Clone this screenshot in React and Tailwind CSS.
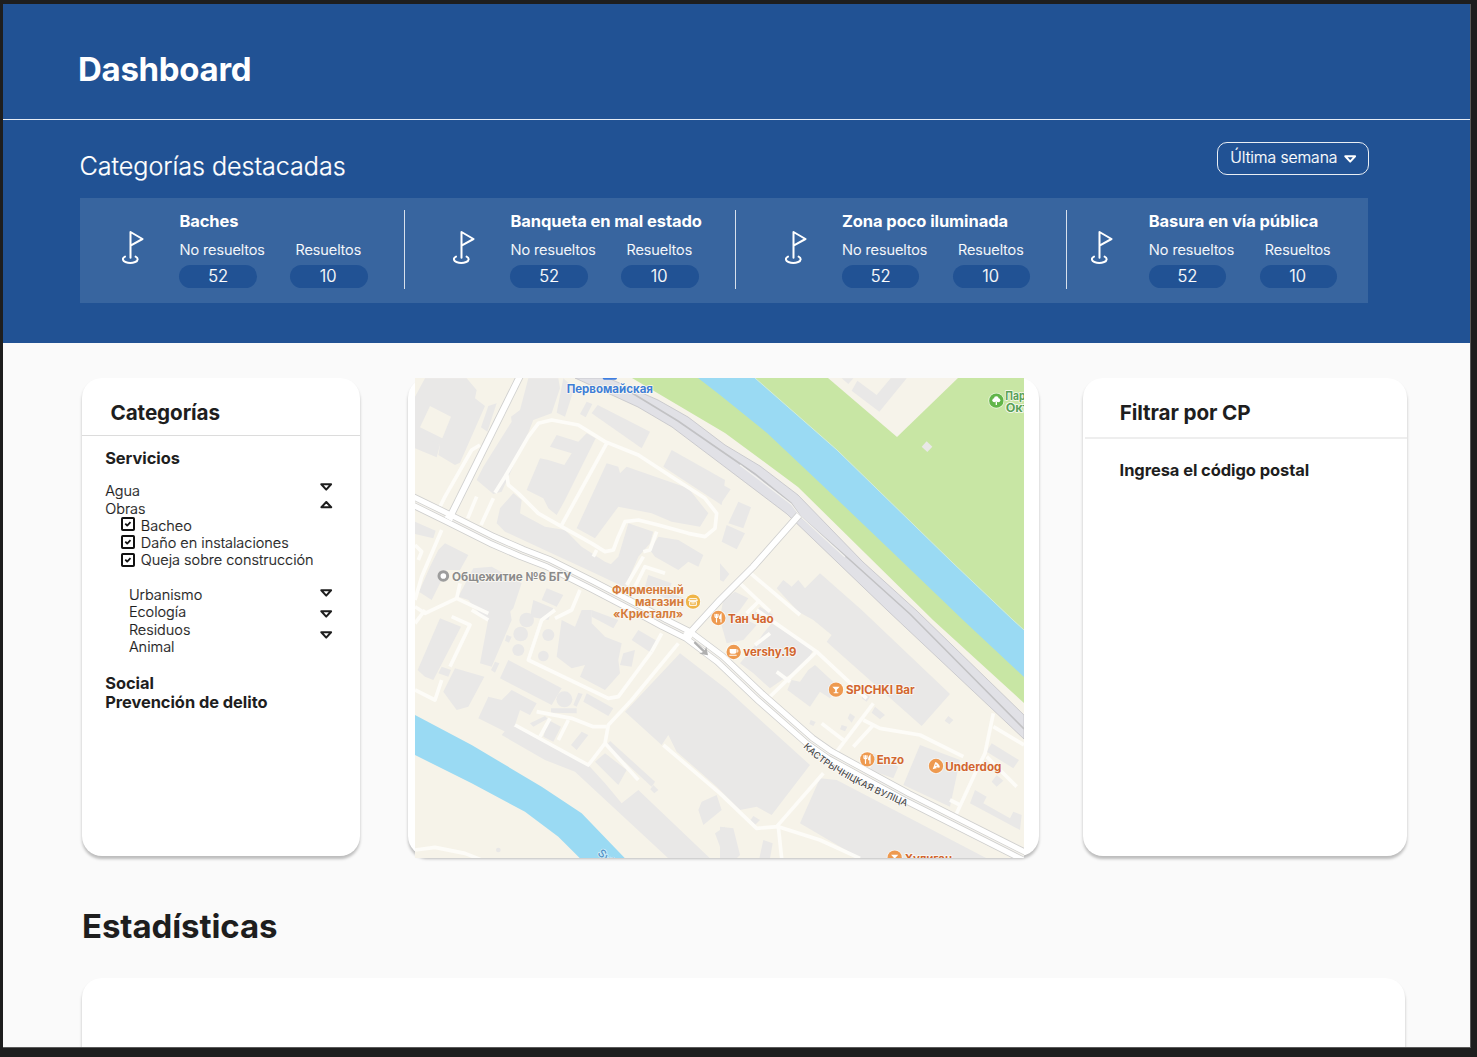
import React from "react";

const stats = [
  { name: "Baches", cell: "w-[324.5px] pl-[42.5px]" },
  { name: "Banqueta en mal estado", cell: "w-[331px] pl-[48px] border-l" },
  { name: "Zona poco iluminada", cell: "w-[331px] pl-[48.5px] border-l" },
  { name: "Basura en vía pública", cell: "flex-1 pl-[24.4px] border-l" },
];

const light = "font-light [-webkit-text-stroke:0.2px_currentColor]";

function Flag() {
  return (
    <svg className="mt-5 h-[34px] w-[22px] shrink-0" viewBox="0 0 22 34" fill="none" stroke="#fff" strokeWidth="2" strokeLinejoin="round" strokeLinecap="round">
      <path d="M8.5 27.8V2L20.5 9L8.5 15.6" />
      <path d="M3 26.6C-.1 28 .4 30.9 3.4 32C6 33 10.6 33 13.2 32C16.2 30.9 16.6 28 13.6 26.6" />
    </svg>
  );
}

function Arrow({ up, className = "" }) {
  return (
    <svg className={`block h-[8px] w-[13px] ${up ? "rotate-180" : ""} ${className}`} viewBox="0 0 13 8" fill="none" stroke="currentColor" strokeWidth="2" strokeLinejoin="round">
      <path d={up ? "M1.8 1.8H11.6L6.7 7Z" : "M1.3 1.3H11.1L6.2 6.6Z"} />
    </svg>
  );
}

function Check() {
  return (
    <svg className="block h-[14px] w-[14px]" viewBox="0 0 14 14" fill="none" stroke="#111" strokeLinejoin="round">
      <rect x="1" y="1" width="12" height="12" rx="0.8" strokeWidth="2" />
      <path d="M4.3 6.7L6.2 8.6L9.5 5.1" strokeWidth="1.8" />
    </svg>
  );
}

function Pill({ label, value, labelClass = "", valueClass = "" }) {
  return (
    <div className="w-[77.5px]">
      <p className={`h-[18px] text-[14.5px] leading-[18px] whitespace-nowrap ${labelClass}`}>{label}</p>
      <div className={`mt-[6.2px] h-[23px] rounded-full bg-[#215294] text-center text-[16.6px] leading-[23px] ${valueClass}`}>{value}</div>
    </div>
  );
}

const poly = (list) => list.map((p) => <polygon key={p} points={p} />);
const line = (list) => list.map((p) => <polyline key={p} points={p} />);

const A = "translate(405 370) scale(.33333)";
const B = "translate(720 370) scale(.33333)";
const C = "translate(405 610) scale(.33333)";
const D = "translate(720 610) scale(.33333)";

const buildingsA = [
  "60,25 185,25 215,60 210,85 240,108 165,278 150,285 100,255 105,225 30,200 30,80",
  "30,185 105,225 95,262 30,235",
  "250,108 275,100 247,185 228,172",
  "370,25 460,25 465,55 440,130 385,150 365,200 290,365 265,372 215,330 235,290 320,155 318,140 345,120",
  "475,25 508,55 480,140 455,128",
  "545,95 562,102 542,142 525,132",
  "578,105 735,185 710,235 560,130",
  "455,195 520,215 545,190 572,205 480,390 455,435 430,415 415,385 365,360 405,265 430,270 478,285 500,250 435,230",
  "605,280 640,290 645,310 665,290 850,355 910,430 885,470 800,455 740,430 640,410 570,505 515,475",
  "800,240 960,330 950,405 775,290",
  "285,415 325,370 350,390 345,430 420,470 480,480 530,530 600,575 660,600 665,655 560,605 430,545 300,485 275,460",
  "670,460 745,485 735,520 700,560 665,640 600,600 640,560",
  "760,500 820,510 895,555 880,590 850,575 820,600 750,560 735,540",
  "30,455 92,482 85,505 30,492",
  "120,520 190,555 165,600 125,600 80,690 42,665 75,590 100,540",
  "205,595 260,590 350,640 325,715 290,750 240,750 190,690 160,680",
  "425,655 475,675 455,710 410,690",
  "385,690 445,715 430,750 375,740",
  "730,615 800,640 790,665 850,690 830,715 720,650",
];
const roadsA = [
  "270,368 300,320 370,200 400,160 440,150 520,165 600,215 700,255 800,320 900,385 935,430 930,475 900,500 850,490 760,465 700,450 660,455 640,500 625,540 600,545 560,520 470,470 400,430 340,370 310,345 305,310",
  "605,220 470,465",
  "225,225 200,240 120,380 100,420",
  "215,380 188,445",
  "265,385 228,465",
  "755,485 735,540 715,545",
  "715,560 665,645",
  "780,610 720,590 690,650",
  "110,480 50,620 30,690",
  "30,710 60,730 155,685 250,730",
  "155,685 165,640",
  "30,525 50,545 40,570",
  "525,660 500,720 450,745",
  "575,540 565,560",
];
const buildingsC = [
  "105,25 168,50 85,210 60,200 38,180",
  "150,175 238,200 190,290 155,300 115,245",
  "110,170 138,180 130,200 100,190",
  "255,0 315,0 320,30 260,170 225,160",
  "310,150 470,235 440,285 285,205",
  "320,240 395,280 375,315 345,300 330,345 310,370 220,325 250,260 290,270",
  "310,350 345,350 440,410 550,465 600,520 650,580 700,540 915,745 790,745 510,485 420,450 290,375",
  "570,455 600,430 665,480 640,525",
  "615,393 750,515 740,530 605,405",
  "745,525 760,540 748,550 736,538",
  "470,30 510,50 530,0 560,0 560,40 600,80 650,100 640,150 645,190 600,240 525,200 540,165 500,175 455,140",
  "560,0 640,30 625,55 560,20",
  "700,60 760,95 740,130 680,90",
  "655,130 690,120 680,170 645,165",
  "545,250 625,295 610,318 535,275",
  "430,330 468,350 445,395 415,380",
  "530,365 550,375 515,420 498,405",
  "375,340 420,318 428,326 385,350",
  "438,295 515,295 515,310 438,308",
  "520,248 533,252 515,290 505,285",
  "270,155 283,160 270,188 258,180",
  "305,75 320,80 312,98 300,92",
  "890,575 935,555 950,600 895,645 880,600",
  "930,670 960,650 960,725 945,710",
];
const circlesC = [[365, 30, 22], [347, 72, 22], [340, 120, 18], [430, 75, 18], [415, 138, 16], [478, 268, 24], [280, 720, 7]];
const roadsC = [
  "30,240 90,270 110,210",
  "140,20 195,45 135,170",
  "450,0 410,30 370,150 610,265 640,260 740,125",
  "820,100 680,270 610,345 600,400 550,465 330,345",
  "395,305 500,325 565,350 605,350",
  "435,325 405,380",
  "490,330 460,390",
  "600,400 700,510",
  "30,720 90,712 180,730 230,750",
  "30,40 60,0",
  "200,0 250,30",
  "770,70 740,125",
];
const buildingsB = [
  "0,340 32,358 0,405",
  "55,395 93,412 70,475 25,460",
  "20,465 75,490 50,538 5,515",
  "0,580 28,612 10,635 0,630",
  "10,690 45,665 85,685 60,720 30,750 0,740",
  "120,710 160,735 140,760 95,740",
];
const roadsB = ["80,600 240,735", "60,640 150,725", "120,690 80,730"];
const buildingsD = [
  "170,-65 190,-90 215,-70 235,-90 255,-65 300,-110 425,0 690,252 605,348 320,95 335,75 280,30 235,5",
  "155,40 280,120 250,170 200,200 150,235 100,190 60,160 110,100 130,70",
  "0,30 40,10 110,45 70,90 20,100",
  "285,165 350,225 330,265 300,245 270,290 202,240 215,210 240,215 265,180",
  "430,245 450,260 440,275 425,265",
  "465,290 495,315 480,328 455,308",
  "390,310 405,320 395,338 383,325",
  "365,345 382,350 375,364 360,358",
  "272,330 287,336 280,348 268,342",
  "685,318 700,330 688,343 674,332",
  "600,405 720,450 690,590 550,525",
  "460,430 535,470 520,505 450,480",
  "815,400 897,450 880,475 800,425",
  "765,540 800,560 790,580 870,625 880,605 905,615 900,660 750,580",
  "830,495 850,512 830,530 815,515",
  "-120,130 20,238 270,465 155,615 110,590 60,600 -10,530 -130,425 -155,375 -175,405 -285,305",
  "100,618 120,630 105,645 90,632",
  "0,650 40,655 60,735 50,745 0,745",
  "130,690 158,700 150,745 118,745",
  "300,505 350,510 800,745 420,745 240,640",
];
const roadsD = [
  "170,650 310,490",
  "-170,405 0,550 110,655 175,650 185,745",
  "175,650 300,690 420,745",
  "350,425 460,280",
  "110,0 290,125 440,265",
  "290,125 150,260",
  "170,185 210,215",
  "150,70 105,105",
  "430,330 480,355 600,375 730,440",
  "400,410 460,345",
  "820,310 795,430 770,480 705,620",
  "820,350 912,405",
  "305,340 370,390",
  "800,440 890,530",
  "690,570 720,585",
];

const mainRoad = "405,497 448,518 492,540 522,553 548,563 592,585 640,610 664,623 688,635 720,659 760,697 810,741 830,755 907,797 1030,859";

function Pin({ x, y, fill = "#ee9a50", children }) {
  return (
    <g transform={`translate(${x + 1} ${y})`}>
      <circle r="24" fill="#fff" opacity=".6" />
      <circle r="21.5" fill={fill} />
      {children}
    </g>
  );
}

const Fork = () => (
  <g fill="none" stroke="#fff" strokeWidth="3.6" strokeLinecap="round">
    <path d="M-10 -11V-5Q-10 -1 -5.500 -1Q-1 -1 -1 -5V-11M-5.500 -11V12" />
    <path d="M8 12V-11Q3 -6 4 1H8" fill="#fff" />
  </g>
);
const Glass = () => <path d="M-11 -9H11L2.500 0V8H7V11H-7V8H-2.500V0Z" fill="#fff" />;

function Label({ x, y, len, fill = "#d2662f", children }) {
  return (
    <text x={x} y={y} textLength={len} lengthAdjust="spacingAndGlyphs" fill={fill}>
      {children}
    </text>
  );
}

function CityMap() {
  return (
    <svg className="block h-[480.5px] w-[609px]" viewBox="415 378 609 480.5" preserveAspectRatio="none">
      <rect x="415" y="378" width="609" height="481" fill="#f6f3e9" />
      <g fill="#e9e8e7">
        <g transform={A}>
          {poly(buildingsA)}
          <polygon points="75,108 138,140 112,205 45,172" fill="#f6f3e9" />
        </g>
        <g transform={B}>{poly(buildingsB)}</g>
        <g transform={C}>
          {poly(buildingsC)}
          {circlesC.map(([x, y, r]) => <circle key={`${x}-${y}`} cx={x} cy={y} r={r} />)}
        </g>
        <g transform={D}>{poly(buildingsD)}</g>
      </g>
      <g fill="none" stroke="#fdfcf8" strokeWidth="11" strokeLinejoin="round">
        <g transform={A}>{line(roadsA)}</g>
        <g transform={B}>{line(roadsB)}</g>
        <g transform={C}>{line(roadsC)}</g>
        <g transform={D}>{line(roadsD)}</g>
      </g>

      {/* Park and rivers */}
      <polygon points="632,378 725,433 798,487 933,620 1024,703 1024,378" fill="#c8e6a4" />
      <polygon points="828,378 897,437 958,378" fill="#f6f3ea" />
      <g transform={B} fill="#e9e8e7">
        <polygon points="395,62 412,32 470,75 512,25 560,25 478,125" />
        <polygon points="365,25 400,25 385,42" />
        <polygon points="620,214 637,230 622,246 605,230" />
      </g>
      <polygon points="755,378 837,450 953,563 1013,620 1024,630 1024,677 963,620 887,547 820,483 767,433 720,395 698,378" fill="#9adaf3" />
      <polyline points="755,378 837,450 953,563 1013,620 1024,630" fill="none" stroke="#d5efdc" strokeWidth=".9" />
      <polygon transform={C} points="30,315 200,405 410,530 530,610 662,747 527,747 460,680 360,605 200,520 30,435" fill="#9adaf3" />

      {/* Railway */}
      <polygon points="608,378 658,400 688,417 725,445 760,466 798,495 863,562 917,611 1024,715 1024,739 888,611 787,514 725,467 672,427 638,407 575,378" fill="#e1e1e6" stroke="#c3c3c8" strokeWidth=".8" />
      <polyline points="632,393 678,421 720,450 755,474 791,503 800,516 850,560 910,614 1024,729" fill="none" stroke="#c2c2c4" strokeWidth="1.6" />
      <polyline points="740,465 791,504 800,516 845,557" fill="none" stroke="#f3f2ee" strokeWidth="1.2" />

      {/* Streets */}
      <g fill="none" strokeLinejoin="round">
        <g stroke="#cfcfce">
          <polyline points="520,376 450,517" strokeWidth="7.6" />
          <polyline points="799,515 753,567 720,600 688,635" strokeWidth="7.4" />
          <polyline points={mainRoad} strokeWidth="14.6" />
        </g>
        <g stroke="#fff">
          <polyline points="520,376 450,517" strokeWidth="6" />
          <polyline points="799,515 753,567 720,600 688,635" strokeWidth="5.8" />
          <polyline points={mainRoad} strokeWidth="13" />
        </g>
        <polyline points={mainRoad} stroke="#cfcfce" strokeWidth="2.6" />
        <polyline points={mainRoad} stroke="#f4f2ec" strokeWidth="1.2" />
        <path d="M446 515L453 519M684 633L692 637" stroke="#fff" strokeWidth="5" />
      </g>
      <g transform={C} fill="#b0b0b0">
        <path d="M870 94L899 121L904 110L909 136L883 131L894 126L866 99Z" />
      </g>

      {/* Places */}
      <g fontFamily="Inter, sans-serif" fontWeight="700" fontSize="34.5" stroke="#fbf9f3" strokeWidth="5" strokeLinejoin="round" paintOrder="stroke">
        <g transform={A}>
          <rect x="593" y="15" width="43" height="14" rx="5" fill="#3f7ee0" stroke="none" />
          <Label x={485} y={69} len={259} fill="#3f7ed6">Первомайская</Label>
          <circle cx="115" cy="618" r="13" fill="#fff" stroke="#9d9d9d" strokeWidth="9" paintOrder="normal" />
          <Label x={141} y={632} len={358} fill="#8b8b8b">Общежитие №6 БГУ</Label>
          <Label x={621} y={673} len={215} fill="#d57c3b">Фирменный</Label>
          <Label x={690} y={708} len={147} fill="#d57c3b">магазин</Label>
          <Label x={624} y={743} len={211} fill="#d57c3b">«Кристалл»</Label>
        </g>
        <g transform={B}>
          <Label x={856} y={90} len={78} fill="#57a157">Парк</Label>
          <Label x={857} y={125} len={70} fill="#57a157">Окт</Label>
        </g>
        <g transform={D}>
          <Label x={24} y={39} len={137}>Тан Чао</Label>
          <Label x={70} y={139} len={159}>vershy.19</Label>
          <Label x={378} y={252} len={206}>SPICHKI Bar</Label>
          <Label x={470} y={461} len={82}>Enzo</Label>
          <Label x={676} y={482} len={168}>Underdog</Label>
          <Label x={554} y={759} len={142}>Хулиган</Label>
        </g>
      </g>
      <g stroke="none">
        <g transform={A}>
          <Pin x={863} y={695} fill="#efb548">
            <path d="M-11 -9H11L13 -3H-13ZM-10 0H10V11H-10Z" fill="none" stroke="#fff" strokeWidth="3" />
            <path d="M-5 4H5" stroke="#fff" strokeWidth="3" />
          </Pin>
          <Pin x={939} y={744}><Fork /></Pin>
        </g>
        <g transform={B}>
          <Pin x={828} y={92} fill="#61b549">
            <path d="M-2 2H2V13H-2Z" fill="#fff" />
            <circle cx="-6" cy="-1" r="6" fill="#fff" />
            <circle cx="6" cy="-1" r="6" fill="#fff" />
            <circle cy="-6" r="7" fill="#fff" />
          </Pin>
        </g>
        <g transform={D}>
          <Pin x={40} y={126}>
            <path d="M-12 -9H8V0Q8 5 3 5H-7Q-12 5 -12 0ZM-13 8H9V11.500H-13Z" fill="#fff" />
            <path d="M8 -6H12.500V0H8" fill="none" stroke="#fff" strokeWidth="2.5" />
          </Pin>
          <Pin x={347} y={239}><Glass /></Pin>
          <Pin x={441} y={448}><Fork /></Pin>
          <Pin x={647} y={468}>
            <path d="M-10 10L-2 -12Q9 -8 12 4Z" fill="#fff" />
            <circle cx="0" cy="-2" r="2.2" fill="#ee9a50" />
            <circle cx="3" cy="4" r="2" fill="#ee9a50" />
          </Pin>
          <Pin x={523} y={743}><Glass /></Pin>
          <path id="street" d="M249 411C304 468 402 526 564 592" fill="none" />
          <text fontFamily="Inter, sans-serif" fontSize="28" fontWeight="500" fill="#505050" stroke="#fff" strokeWidth="4" paintOrder="stroke">
            <textPath href="#street" textLength="360" lengthAdjust="spacing">КАСТРЫЧНІЦКАЯ ВУЛІЦА</textPath>
          </text>
        </g>
        <text transform="translate(597 854) rotate(42)" fontFamily="Inter, sans-serif" fontSize="11" fontWeight="500" fill="#4f8fc4" stroke="#d6f0fa" strokeWidth="1.5" paintOrder="stroke">Svi</text>
      </g>
    </svg>
  );
}

const card = "h-[478px] rounded-[20px] bg-white shadow-[0_3px_3px_rgba(0,0,0,0.25)]";

export default function App() {
  return (
    <div className="h-[1057px] w-[1477px] overflow-hidden bg-[#1e1e1e] pt-[4px] pl-[3px] font-['Inter',sans-serif] text-[#1e1e1e]">
      <div className="h-[1044px] w-[1468px] overflow-hidden border-r border-b border-[#5a5a5a] bg-[#fafafa]">
        <header className="h-[339.3px] bg-[#215294] text-white">
          <div className="h-[116px] border-b border-[#e6ecf5] pt-[45.4px] pl-[75px]">
            <h1 className="text-[33px] leading-[40px] font-bold tracking-[-0.3px]">Dashboard</h1>
          </div>
          <div className="flex h-[77.5px] justify-between pr-[101.2px] pl-[76.5px]">
            <h2 className={`mt-[29.5px] text-[25.2px] leading-[32px] tracking-[-0.003em] ${light}`}>Categorías destacadas</h2>
            <button className={`mt-[21.6px] flex h-[33px] w-[152px] items-center rounded-[10px] border border-white/90 pl-[12.5px] text-[15.75px] tracking-[-0.006em] ${light}`}>
              Última semana
              <Arrow className="mt-px ml-[6.2px]" />
            </button>
          </div>
          <div className="ml-[76.5px] flex h-[105.5px] w-[1288.5px] bg-[#38659f] py-[12.5px]">
            {stats.map((s) => (
              <div key={s.name} className={`flex h-[78.5px] border-white/80 ${s.cell}`}>
                <Flag />
                <div className="ml-[35.4px]">
                  <h3 className="text-[16.5px] leading-[22px] font-bold tracking-[-0.005em]">{s.name}</h3>
                  <div className={`mt-[8.8px] flex gap-[33.5px] ${light}`}>
                    <Pill label="No resueltos" value="52" />
                    <Pill label="Resueltos" value="10" labelClass="pl-[5px]" valueClass="pr-[2px]" />
                  </div>
                </div>
              </div>
            ))}
          </div>
        </header>

        <main className="pl-[79px]">
          <div className="mt-[34.7px] flex">
            <section className={`w-[278px] ${card}`}>
              <h2 className="h-[58px] border-b border-[#dcdcdc] pt-[21.2px] pl-[28.5px] text-[20.7px] leading-[28px] font-bold tracking-[-0.005em]">Categorías</h2>
              <h3 className="mt-[11.2px] ml-[23.2px] text-[16.4px] leading-[22px] font-bold tracking-[-0.003em]">Servicios</h3>
              <div className={`mt-[13px] flex h-[173.3px] justify-between pr-[27.5px] pl-[23.2px] text-[14.5px] leading-[17.33px] tracking-[-0.001em] ${light}`}>
                <div>
                  <p>Agua</p>
                  <p>Obras</p>
                  <div className="flex pl-[15.6px]">
                    <div className="flex flex-col gap-[4.2px]">
                      <Check />
                      <Check />
                      <Check />
                    </div>
                    <div className="pl-[6px] whitespace-nowrap">
                      <p>Bacheo</p>
                      <p>Daño en instalaciones</p>
                      <p>Queja sobre construcción</p>
                    </div>
                  </div>
                  <div className="mt-[17.2px] pl-[23.7px]">
                    <p>Urbanismo</p>
                    <p>Ecología</p>
                    <p>Residuos</p>
                    <p>Animal</p>
                  </div>
                </div>
                <div className="flex flex-col">
                  <Arrow className="mt-[0.5px]" />
                  <Arrow up className="mt-[10.7px]" />
                  <Arrow className="mt-[80px]" />
                  <Arrow className="mt-[12.3px]" />
                  <Arrow className="mt-[13.5px]" />
                </div>
              </div>
              <div className="mt-[18.5px] pl-[23.2px] text-[16.4px] leading-[19.4px] font-bold tracking-[-0.002em]">
                <p>Social</p>
                <p>Prevención de delito</p>
              </div>
            </section>

            <section className={`ml-[47.6px] w-[631.5px] pl-[7.4px] ${card}`}>
              <CityMap />
            </section>

            <section className={`ml-[44px] w-[324px] ${card}`}>
              <h2 className="ml-[2px] h-[61px] border-b-2 border-[#eeeeee] pt-[21.2px] pl-[34.7px] text-[20.7px] leading-[28px] font-bold tracking-[-0.006em]">Filtrar por CP</h2>
              <p className="mt-[20px] ml-[36.5px] text-[16.5px] leading-[22px] font-bold tracking-[-0.005em]">Ingresa el código postal</p>
            </section>
          </div>

          <h2 className="mt-[50.5px] text-[33px] leading-[40px] font-bold tracking-[-0.1px]">Estadísticas</h2>
          <section className="mt-[31.5px] h-[120px] w-[1323px] rounded-[20px] bg-white shadow-[0_3px_3px_rgba(0,0,0,0.25)]" />
        </main>
      </div>
    </div>
  );
}
